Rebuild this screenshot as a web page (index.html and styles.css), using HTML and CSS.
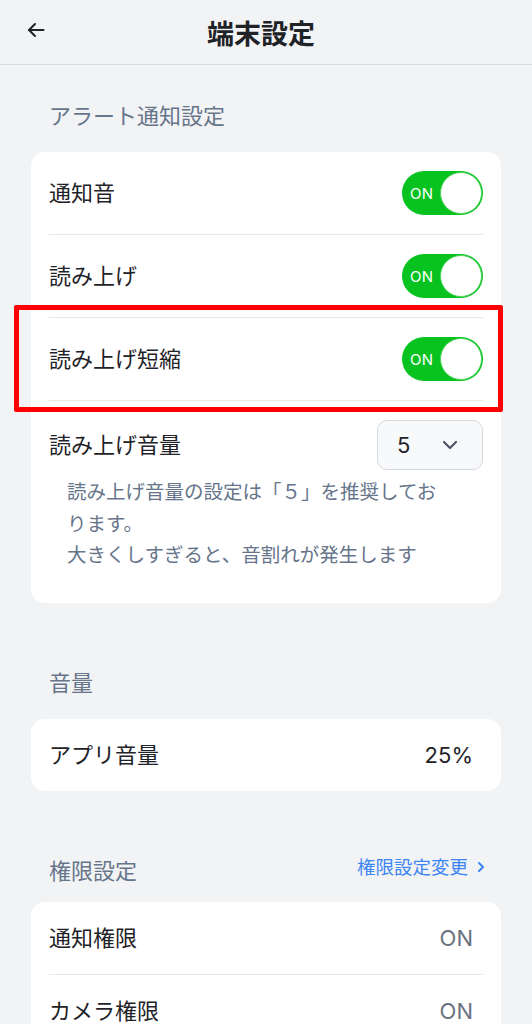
FILE: index.html
```html
<!DOCTYPE html>
<html lang="ja">
<head>
    <meta charset="UTF-8">
    <meta name="viewport" content="width=device-width, initial-scale=1.0">
    <title>端末設定</title>
    <link rel="stylesheet" href="styles.css">
</head>
<body>
    <header class="app-header">
        <button class="back-button" aria-label="戻る">
            <svg width="18" height="16" viewBox="0 0 18 16" fill="none" stroke="#1f2328" stroke-width="2" stroke-linecap="round" stroke-linejoin="round">
                <path d="M16.5 8H2"/>
                <path d="M8 2L2 8l6 6"/>
            </svg>
        </button>
        <h1 class="app-title">端末設定</h1>
    </header>

    <main class="settings">
        <section class="settings-section">
            <div class="section-head">
                <h2 class="section-title">アラート通知設定</h2>
            </div>
            <div class="card">
                <div class="row">
                    <span class="row-label">通知音</span>
                    <span class="toggle"><span class="toggle-text">ON</span><span class="toggle-knob"></span></span>
                </div>
                <div class="row">
                    <span class="row-label">読み上げ</span>
                    <span class="toggle"><span class="toggle-text">ON</span><span class="toggle-knob"></span></span>
                </div>
                <div class="row">
                    <span class="row-label">読み上げ短縮</span>
                    <span class="toggle"><span class="toggle-text">ON</span><span class="toggle-knob"></span></span>
                </div>
                <div class="row row-volume">
                    <span class="row-label">読み上げ音量</span>
                    <span class="select">
                        <span class="select-value">5</span>
                        <svg width="16" height="10" viewBox="0 0 16 10" fill="none" stroke="#4b5563" stroke-width="2.2" stroke-linecap="round" stroke-linejoin="round">
                            <path d="M2 2l6 6 6-6"/>
                        </svg>
                    </span>
                </div>
                <p class="note">読み上げ音量の設定は「５」を推奨しております。<br>大きくしすぎると、音割れが発生します</p>
            </div>
        </section>

        <section class="settings-section">
            <div class="section-head">
                <h2 class="section-title">音量</h2>
            </div>
            <div class="card">
                <div class="row row-text">
                    <span class="row-label">アプリ音量</span>
                    <span class="row-value">25%</span>
                </div>
            </div>
        </section>

        <section class="settings-section">
            <div class="section-head section-head-link">
                <h2 class="section-title">権限設定</h2>
                <a class="section-link" href="#">権限設定変更
                    <svg width="8" height="12" viewBox="0 0 8 12" fill="none" stroke="#3d86f2" stroke-width="2" stroke-linecap="round" stroke-linejoin="round">
                        <path d="M2 2l4 4-4 4"/>
                    </svg>
                </a>
            </div>
            <div class="card">
                <div class="row row-text">
                    <span class="row-label">通知権限</span>
                    <span class="row-value muted">ON</span>
                </div>
                <div class="row row-text">
                    <span class="row-label">カメラ権限</span>
                    <span class="row-value muted">ON</span>
                </div>
            </div>
        </section>
    </main>

    <div class="highlight"></div>
</body>
</html>
```

FILE: styles.css
```css
body {
    font-family: Inter, "Noto Sans CJK JP", sans-serif;
    background: #f2f3f5;
    color: #1f2328;
    margin: 0;
    padding: 0;
    position: relative;
}

.app-header {
    height: 64px;
    display: flex;
    align-items: center;
    justify-content: center;
    position: relative;
    border-bottom: 1px solid #d8dadf;
}

.back-button {
    position: absolute;
    left: 27px;
    top: 22px;
    padding: 0;
    border: none;
    background: none;
    display: flex;
}

.app-title {
    margin: 0 10px 0 0;
    font-size: 27px;
    font-weight: 700;
    color: #1f2328;
}

.settings {
    padding: 0 31px;
}

.settings-section {
    margin-top: 37px;
}

.settings-section + .settings-section {
    margin-top: 66px;
}

.section-head {
    padding: 0 18px;
    margin-bottom: 22px;
}

.section-head-link {
    display: flex;
    justify-content: space-between;
    align-items: flex-start;
    margin-bottom: 17px;
}

.section-title {
    margin: 0;
    font-size: 22px;
    line-height: 28px;
    font-weight: 400;
    color: #66758a;
}

.section-link {
    display: flex;
    align-items: center;
    gap: 9px;
    font-size: 18.5px;
    line-height: 20px;
    color: #3d86f2;
    text-decoration: none;
    margin-right: -2px;
}

.card {
    background: #ffffff;
    border-radius: 14px;
    padding: 0 18px;
}

.row {
    display: flex;
    align-items: center;
    justify-content: space-between;
    padding: 19px 0;
    border-bottom: 1px solid #e6e8ec;
}

.row:last-child {
    border-bottom: none;
}

.row-label {
    font-size: 22px;
    line-height: 34px;
    color: #1f2328;
}

.row-value {
    font-size: 22px;
    line-height: 34px;
    color: #1f2328;
    margin-right: 10px;
}

.row-value.muted {
    color: #6b7280;
}

.row-volume {
    border-bottom: none;
    padding-bottom: 0;
}

.toggle {
    width: 81px;
    height: 44px;
    box-sizing: border-box;
    border-radius: 22px;
    background: #07c21f;
    display: flex;
    align-items: center;
    justify-content: space-between;
    padding: 0 1px 0 8px;
}

.toggle-text {
    color: #ffffff;
    font-size: 15px;
    letter-spacing: 0.3px;
}

.toggle-knob {
    width: 42px;
    height: 42px;
    box-sizing: border-box;
    border-radius: 50%;
    background: #ffffff;
    border: 1px solid #4fd65e;
}

.select {
    width: 106px;
    height: 50px;
    box-sizing: border-box;
    border: 1px solid #d6d9de;
    border-radius: 10px;
    background: #f8f9fb;
    display: flex;
    align-items: center;
    justify-content: space-between;
    padding: 0 24px 0 19px;
}

.select-value {
    font-size: 22px;
    color: #1f2328;
}

.note {
    margin: 7px 0 0;
    padding: 0 0 31px 18px;
    max-width: 380px;
    font-size: 19.5px;
    line-height: 31.5px;
    color: #66758a;
}

.highlight {
    position: absolute;
    left: 14px;
    top: 305px;
    width: 489px;
    height: 107px;
    box-sizing: border-box;
    border: 5px solid #ff0000;
    border-radius: 2px;
}
```
